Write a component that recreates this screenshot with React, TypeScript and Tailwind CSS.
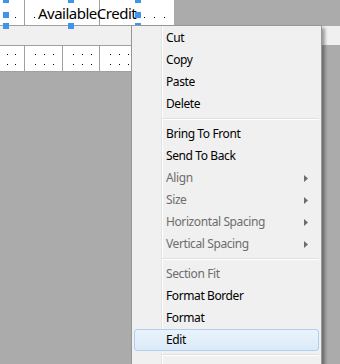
import React from 'react';

type Item = { label: string; disabled?: boolean; sub?: boolean; active?: boolean } | 'sep';

const items: Item[] = [
  { label: 'Cut' },
  { label: 'Copy' },
  { label: 'Paste' },
  { label: 'Delete' },
  'sep',
  { label: 'Bring To Front' },
  { label: 'Send To Back' },
  { label: 'Align', disabled: true, sub: true },
  { label: 'Size', disabled: true, sub: true },
  { label: 'Horizontal Spacing', disabled: true, sub: true },
  { label: 'Vertical Spacing', disabled: true, sub: true },
  'sep',
  { label: 'Section Fit', disabled: true },
  { label: 'Format Border' },
  { label: 'Format' },
  { label: 'Edit', active: true },
  'sep',
];

function DotRow({ n, gap }: { n: number; gap: string }) {
  return (
    <div className={`flex ${gap}`}>
      {Array.from({ length: n }).map((_, i) => (
        <span key={i} className="w-px h-px bg-black" />
      ))}
    </div>
  );
}

function Handle({ pos }: { pos: string }) {
  return <div className={`absolute w-[6px] h-[6px] bg-[#3f95ea] ${pos}`} />;
}

function Arrow() {
  return (
    <svg width="4" height="7" viewBox="0 0 4 7" className="ml-auto mr-[10px]">
      <path d="M0 0 L4 3.5 L0 7 Z" fill="#6d6d6d" />
    </svg>
  );
}

export default function App() {
  return (
    <div className="relative w-[340px] h-[364px] overflow-hidden bg-[#ababab] font-['Noto_Sans',sans-serif]">
      {/* detail row with selected label */}
      <div className="relative flex h-[26px]">
        <div className="flex w-[174px] h-[26px] bg-white border-b border-[#a0a0a0]">
          <div className="w-[25px] border-r border-[#a0a0a0] pl-[6px] pt-[17px]">
            <DotRow n={2} gap="gap-[8px]" />
          </div>
          <div className="w-[75px] border-r border-[#a0a0a0] pl-[9px] pt-[17px]">
            <DotRow n={1} gap="gap-[8px]" />
          </div>
          <div className="flex-1 pl-[44px] pt-[17px]">
            <DotRow n={3} gap="gap-[9px]" />
          </div>
        </div>
        <div className="absolute left-[38px] top-[3px] text-[15px] leading-[20px] text-black tracking-[-0.5px]">
          AvailableCredit
        </div>
        <Handle pos="left-[3px] top-[-3px]" />
        <Handle pos="left-[3px] top-[12px]" />
        <Handle pos="left-[3px] top-[23px]" />
        <Handle pos="left-[68px] top-[-3px]" />
        <Handle pos="left-[68px] top-[23px]" />
        <Handle pos="left-[135px] top-[-3px]" />
        <Handle pos="left-[135px] top-[12px]" />
        <Handle pos="left-[135px] top-[23px]" />
      </div>

      {/* section band */}
      <div className="h-[19px] bg-[#f0f0f0]" />

      {/* empty detail row */}
      <div className="flex w-[300px] h-[27px] bg-white border-y border-[#a0a0a0]">
        <div className="w-[25px] border-r border-[#a0a0a0] pl-[7px] pt-[8px] flex flex-col gap-[9px]">
          <DotRow n={2} gap="gap-[7px]" />
          <DotRow n={2} gap="gap-[7px]" />
        </div>
        {[0, 1, 2, 3, 4].map((i) => (
          <div key={i} className="w-[37.5px] border-r border-[#a0a0a0] pl-[10px] pt-[8px] flex flex-col gap-[9px]">
            <DotRow n={3} gap="gap-[8px]" />
            <DotRow n={3} gap="gap-[8px]" />
          </div>
        ))}
      </div>

      {/* context menu */}
      <div className="absolute left-[131px] top-[25px] w-[191px] h-[360px] bg-[#f0f0f0] border border-[#979797] shadow-[3px_3px_3px_rgba(0,0,0,0.35)] pt-[1px] text-[12px] tracking-[-0.4px]">
        <div className="absolute left-[29px] top-0 bottom-0 w-[2px] border-l border-[#e2e3e3] bg-white" />
        {items.map((it, i) =>
          it === 'sep' ? (
            <div key={i} className="relative h-[8px] flex items-center pl-[30px] pr-[2px]">
              <div className="w-full h-[2px] border-t border-[#e0e0e0] bg-white" />
            </div>
          ) : (
            <div
              key={i}
              className={`relative mx-[2px] h-[22px] flex items-center pl-[31px] rounded-[3px] border ${
                it.active
                  ? 'border-[#aecff0] bg-gradient-to-b from-[#eaf3fc] to-[#dbeaf8]'
                  : 'border-transparent'
              } ${it.disabled ? 'text-[#6d6d6d]' : 'text-black'}`}
            >
              <span className="leading-none">{it.label}</span>
              {it.sub && <Arrow />}
            </div>
          )
        )}
      </div>
    </div>
  );
}
